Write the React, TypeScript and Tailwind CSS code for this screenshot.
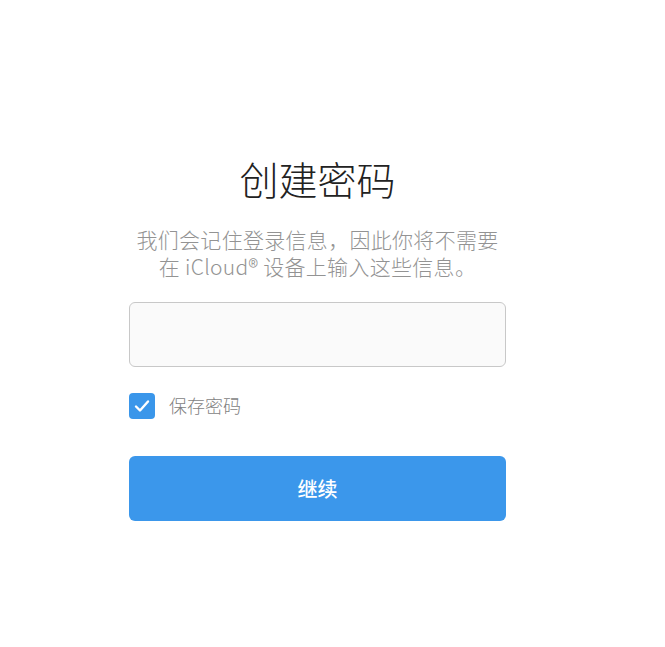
export default function App() {
  return (
    <div
      className="min-h-[647px] w-full bg-white"
      style={{ fontFamily: '"Noto Sans CJK SC", "Noto Sans", sans-serif' }}
    >
      <div className="ml-[129px] flex w-[377px] flex-col pt-[150px]">
        <h1 className="text-center text-[39px] font-light leading-[56px] text-[#222]">
          创建密码
        </h1>
        <p className="mt-[20px] text-center text-[21px] font-light leading-[27px] tracking-[0.3px] text-[#939393]">
          我们会记住登录信息，因此你将不需要
          <br />
          在 iCloud® 设备上输入这些信息。
        </p>
        <input
          type="password"
          className="mt-[22px] h-[65px] w-full rounded-[6px] border border-[#c8c8c8] bg-[#fafafa] px-4 text-lg outline-none"
        />
        <label className="mt-[25px] flex items-center gap-[14px]">
          <span className="flex h-[26px] w-[26px] items-center justify-center rounded-[4px] bg-[#3a96ea]">
            <svg width="18" height="18" viewBox="0 0 18 18" fill="none">
              <path
                d="M3 9.5l4 4 8-9"
                stroke="white"
                strokeWidth="2.4"
                strokeLinecap="round"
                strokeLinejoin="round"
              />
            </svg>
          </span>
          <span className="text-[18px] font-light text-[#7f7f7f]">保存密码</span>
        </label>
        <button className="mt-[37px] flex h-[65px] w-full items-center justify-center rounded-[6px] bg-[#3b97eb] text-[20px] font-medium text-white">
          继续
        </button>
      </div>
    </div>
  );
}
